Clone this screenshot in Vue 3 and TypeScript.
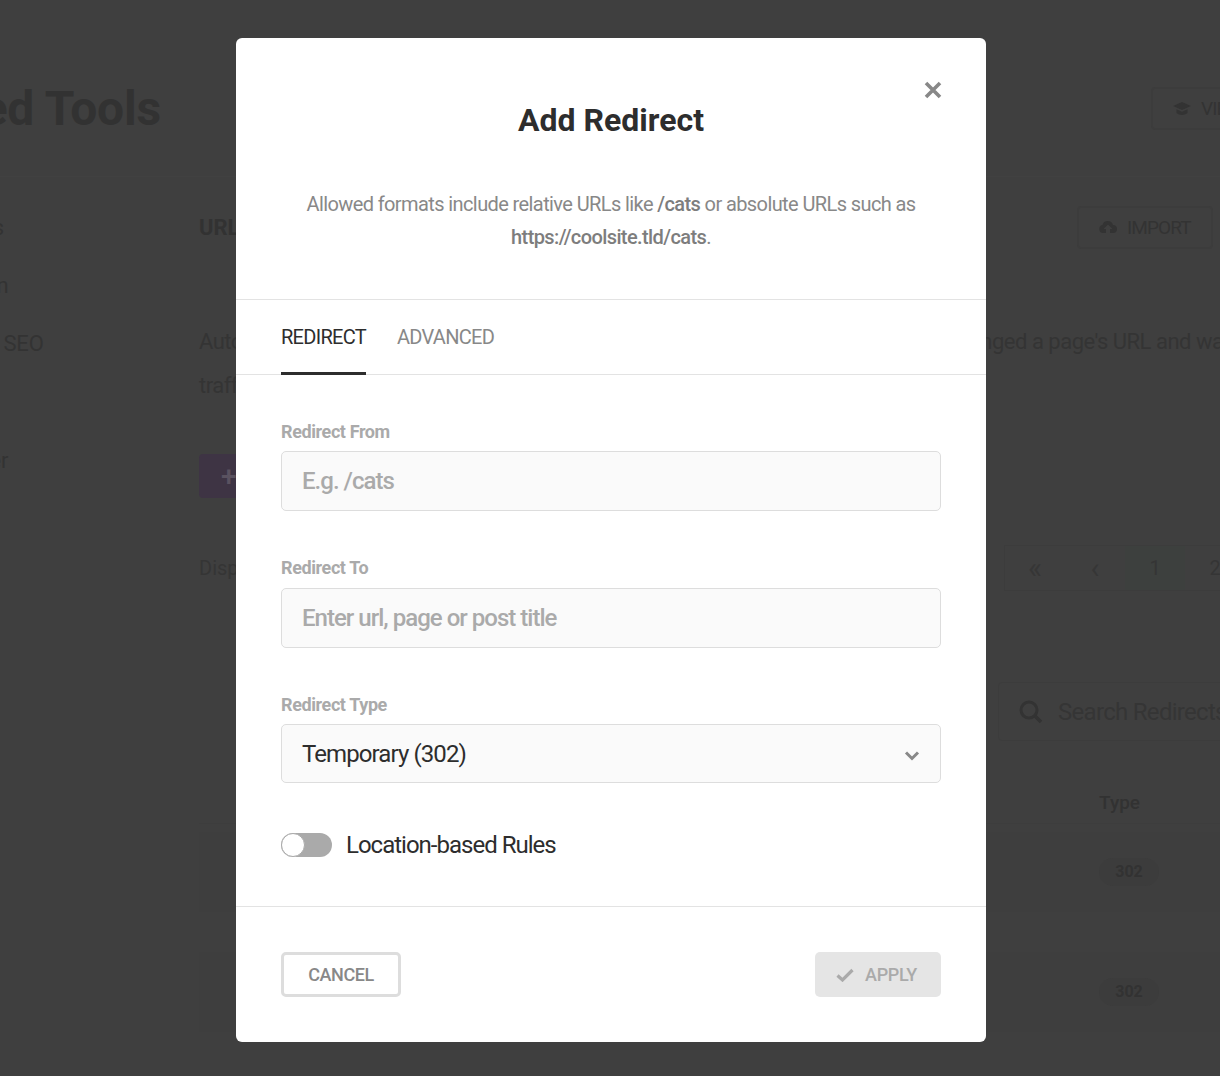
<script setup lang="ts">
const sideItems: string[] = ['Feeds', 'Admin', 'Local SEO', 'Footer']
const rows: string[] = ['302', '302']
</script>

<template>
  <div class="page">
    <div class="backdrop-page">
      <header class="top">
        <h1>Advanced Tools</h1>
        <button class="ghost view">
          <svg width="18" height="14" viewBox="0 0 18 14"><path d="M9 0 0 4l9 4 9-4zM3.500 7.300V11c2.800 2.600 8.200 2.600 11 0V7.300L9 9.700z" fill="#333" /></svg>
          VIEW TUTORIAL
        </button>
      </header>
      <div class="body">
        <nav class="side">
          <a v-for="item in sideItems" :key="item">{{ item }}</a>
        </nav>
        <main class="main">
          <div class="main-head">
            <h2>URL Redirects</h2>
            <button class="ghost import">
              <svg width="18" height="14" viewBox="0 0 18 14"><path d="M4 13a4 4 0 0 1-.6-7.900A5.500 5.500 0 0 1 14 5a4 4 0 0 1 0 8h-3V9h2.500L9 4.500 4.500 9H7v4z" fill="#333" /></svg>
              IMPORT
            </button>
          </div>
          <p class="desc">Automatically redirect visitors from one page to the correct location when you've changed a page's URL and want traffic to keep flowing.</p>
          <button class="add"><span>+</span> ADD NEW</button>
          <div class="pager-row">
            <span>Displaying 1 - 20 of 48</span>
            <div class="pager">
              <i>«</i><i>‹</i><b>1</b><i>2</i>
            </div>
          </div>
          <div class="search-row">
            <div class="search">
              <svg width="24" height="24" viewBox="0 0 24 24"><circle cx="10" cy="10" r="8" fill="none" stroke="#333" stroke-width="3" /><path d="m16 16 6 6" stroke="#333" stroke-width="3.500" /></svg>
              <span>Search Redirects</span>
            </div>
          </div>
          <div class="thead"><span>Type</span></div>
          <div v-for="(row, i) in rows" :key="i" class="trow"><span class="chip">{{ row }}</span></div>
        </main>
      </div>
    </div>

    <section class="modal">
      <button class="close" aria-label="Close">
        <svg width="20" height="20" viewBox="0 0 20 20"><path d="M3 3l14 14M17 3L3 17" stroke="#888" stroke-width="3.600" /></svg>
      </button>
      <div class="m-head">
        <h3>Add Redirect</h3>
        <p>Allowed formats include relative URLs like <strong>/cats</strong> or absolute URLs such as <strong>https://coolsite.tld/cats</strong>.</p>
      </div>
      <div class="tabs">
        <span class="tab active">REDIRECT</span>
        <span class="tab">ADVANCED</span>
      </div>
      <div class="form">
        <label class="field">
          <span>Redirect From</span>
          <div class="control placeholder">E.g. /cats</div>
        </label>
        <label class="field">
          <span>Redirect To</span>
          <div class="control placeholder">Enter url, page or post title</div>
        </label>
        <label class="field">
          <span>Redirect Type</span>
          <div class="control select">
            Temporary (302)
            <svg width="16" height="12" viewBox="0 0 16 12"><path d="M2 3.500l6 6 6-6" fill="none" stroke="#888" stroke-width="3" /></svg>
          </div>
        </label>
        <div class="toggle-row">
          <span class="toggle"><span class="knob"></span></span>
          <span>Location-based Rules</span>
        </div>
      </div>
      <div class="foot">
        <button class="cancel">CANCEL</button>
        <button class="apply">
          <svg width="18" height="14" viewBox="0 0 18 14"><path d="M1.500 7.500l5 4.500L16.500 2" fill="none" stroke="#aaa" stroke-width="3.200" /></svg>
          APPLY
        </button>
      </div>
    </section>
  </div>
</template>

<style>
html, body { margin: 0; background: #3f3f3f; }
</style>

<style scoped>
* { box-sizing: border-box; }
.page {
  position: relative;
  width: 1220px;
  height: 1076px;
  overflow: hidden;
  background: #3f3f3f;
  font-family: Roboto, "Liberation Sans", sans-serif;
  color: #333;
}
button { font-family: inherit; background: none; }

/* dimmed page behind the dialog */
.backdrop-page { width: 1400px; margin-left: -130px; color: #323232; }
.top {
  display: flex;
  justify-content: space-between;
  align-items: center;
  height: 177px;
  padding: 73px 0 32px 0;
  border-bottom: 1px solid #414141;
}
h1 { margin: 0 0 0 -48px; font-size: 48px; font-weight: 700; line-height: 70px; letter-spacing: -0.2px; width: 1250px; white-space: nowrap; flex: none; }
.ghost {
  display: flex; align-items: center; gap: 10px;
  color: #333; border: 2px solid #3c3c3c; border-radius: 4px;
  font-size: 19px; font-weight: 400; letter-spacing: -0.9px; height: 43px; white-space: nowrap; padding: 0 20px; flex: none;
}
.view { margin-right: -78px; }
.body { display: grid; grid-template-columns: 329px 1fr; }
.side { display: flex; flex-direction: column; padding: 38px 0 0 76px; font-size: 22px; letter-spacing: -0.2px; color: #333; }
.side a { display: block; height: 58px; line-height: 26px; white-space: nowrap; }
.side a:nth-child(3) { height: 117px; word-spacing: 4px; margin-left: -4px; }
.main { width: 1060px; }
.main-head { display: flex; align-items: center; justify-content: space-between; height: 72px; padding-top: 28px; width: 1014px; }
h2 { margin: 0; font-size: 22px; font-weight: 700; }
.import { width: 136px; padding: 0 0 0 20px; }
.desc { margin: 71px 0 0; font-size: 22px; line-height: 44px; letter-spacing: -0.5px; width: 1060px; color: #343434; }
.add {
  display: block; margin-top: 46px; height: 44px; width: 170px; border: 0; border-radius: 4px;
  background: #3e3444; color: #5a5260; font-size: 18px; text-align: left; padding-left: 22px;
}
.add span { font-size: 28px; font-weight: 500; }
.pager-row { display: flex; justify-content: space-between; align-items: center; height: 50px; margin-top: 45px; font-size: 20px; color: #353535; width: 1060px; }
.pager { display: flex; align-items: center; height: 46px; margin-right: 14px; font-size: 20px; border: 1px solid #3c3c3c; border-right: 0; }
.pager i, .pager b { font-style: normal; font-weight: 400; width: 60px; height: 44px; line-height: 44px; text-align: center; }
.pager i:nth-child(-n+2) { font-size: 30px; color: #363636; }
.pager b { background: #3d403e; }
.search-row { display: flex; justify-content: flex-end; margin-top: 89px; width: 1060px; }
.search { display: flex; align-items: center; gap: 15px; width: 261px; height: 59px; padding-left: 20px; border: 1px solid #3c3c3c; border-radius: 4px; font-size: 24px; letter-spacing: -0.7px; color: #353535; white-space: nowrap; }
.thead { height: 54px; margin-top: 29px; padding: 18px 0 0 900px; font-size: 19px; font-weight: 500; line-height: 30px; color: #323232; border-bottom: 1px solid #3d3d3d; }
.trow { height: 80px; margin: 8px 0 40px; padding: 0 0 0 900px; display: flex; align-items: center; background: #3e3e3e; }
.chip { width: 60px; height: 28px; line-height: 28px; text-align: center; border-radius: 14px; background: #3c3c3c; font-size: 16px; font-weight: 700; color: #323232; }

/* dialog */
.modal {
  position: absolute;
  left: 236px; top: 38px;
  width: 750px; height: 1004px;
  background: #fff;
  border-radius: 6px;
  display: flex; flex-direction: column;
}
.close { position: absolute; right: 43px; top: 42px; width: 20px; height: 20px; border: 0; padding: 0; display: block; }
.close svg { display: block; }
.m-head { height: 262px; padding: 60px 45px 0; text-align: center; border-bottom: 1px solid #e3e3e3; }
h3 { margin: 0; font-size: 32px; line-height: 44px; font-weight: 700; color: #2d2d2d; }
.m-head p { margin: 46px 0 0; font-size: 20px; line-height: 33px; color: #888; letter-spacing: -0.6px; }
.m-head strong { font-weight: 500; color: #7d7d7d; }
.tabs { display: flex; gap: 31px; height: 75px; padding: 0 45px; border-bottom: 1px solid #e3e3e3; flex: none; }
.tab { height: 75px; line-height: 74px; font-size: 20px; font-weight: 400; color: #888; letter-spacing: -0.7px; }
.tab.active { color: #2d2d2d; box-shadow: inset 0 -3px 0 #2d2d2d; }
.form { flex: 1; padding: 44px 45px 0; border-bottom: 1px solid #e3e3e3; }
.field { display: block; margin-bottom: 44px; }
.field:first-child { margin-bottom: 45px; }
.field:nth-child(3) { margin-bottom: 48px; }
.field > span { display: block; font-size: 18px; line-height: 25px; font-weight: 700; color: #aaa; margin-bottom: 7px; letter-spacing: -0.4px; }
.field:nth-child(2) > span { margin-top: -1px; margin-bottom: 8px; }
.control {
  height: 60px; padding: 0 20px; border: 1px solid #ddd; border-radius: 5px; background: #fafafa;
  display: flex; align-items: center; justify-content: space-between; font-size: 24px; letter-spacing: -0.9px; color: #2d2d2d;
}
.placeholder { color: #aaa; font-weight: 500; letter-spacing: -0.98px; }
.field:nth-child(2) .control { padding-bottom: 1px; }
.select { height: 59px; }
.select svg { margin-top: 2px; }
.toggle-row { display: flex; align-items: center; gap: 14px; font-size: 24px; letter-spacing: -1px; color: #2d2d2d; }
.toggle { display: block; width: 51px; height: 24px; border-radius: 12px; background: #aaa; position: relative; }
.knob { position: absolute; left: 0; top: 0; width: 24px; height: 24px; border-radius: 50%; background: #fff; border: 1px solid #aaa; }
.foot { display: flex; justify-content: space-between; align-items: flex-start; height: 135px; padding: 45px 45px 0; flex: none; }
.cancel { width: 120px; height: 45px; border: 3px solid #ddd; border-radius: 5px; background: #fff; color: #888; font-size: 18px; font-weight: 500; letter-spacing: -0.45px; padding: 0; }
.apply { display: flex; align-items: center; justify-content: center; gap: 11px; width: 126px; height: 45px; border: 0; border-radius: 5px; background: #e5e5e5; color: #aaa; font-size: 18px; font-weight: 500; letter-spacing: -0.3px; padding: 0 3px 0 0; }
</style>
